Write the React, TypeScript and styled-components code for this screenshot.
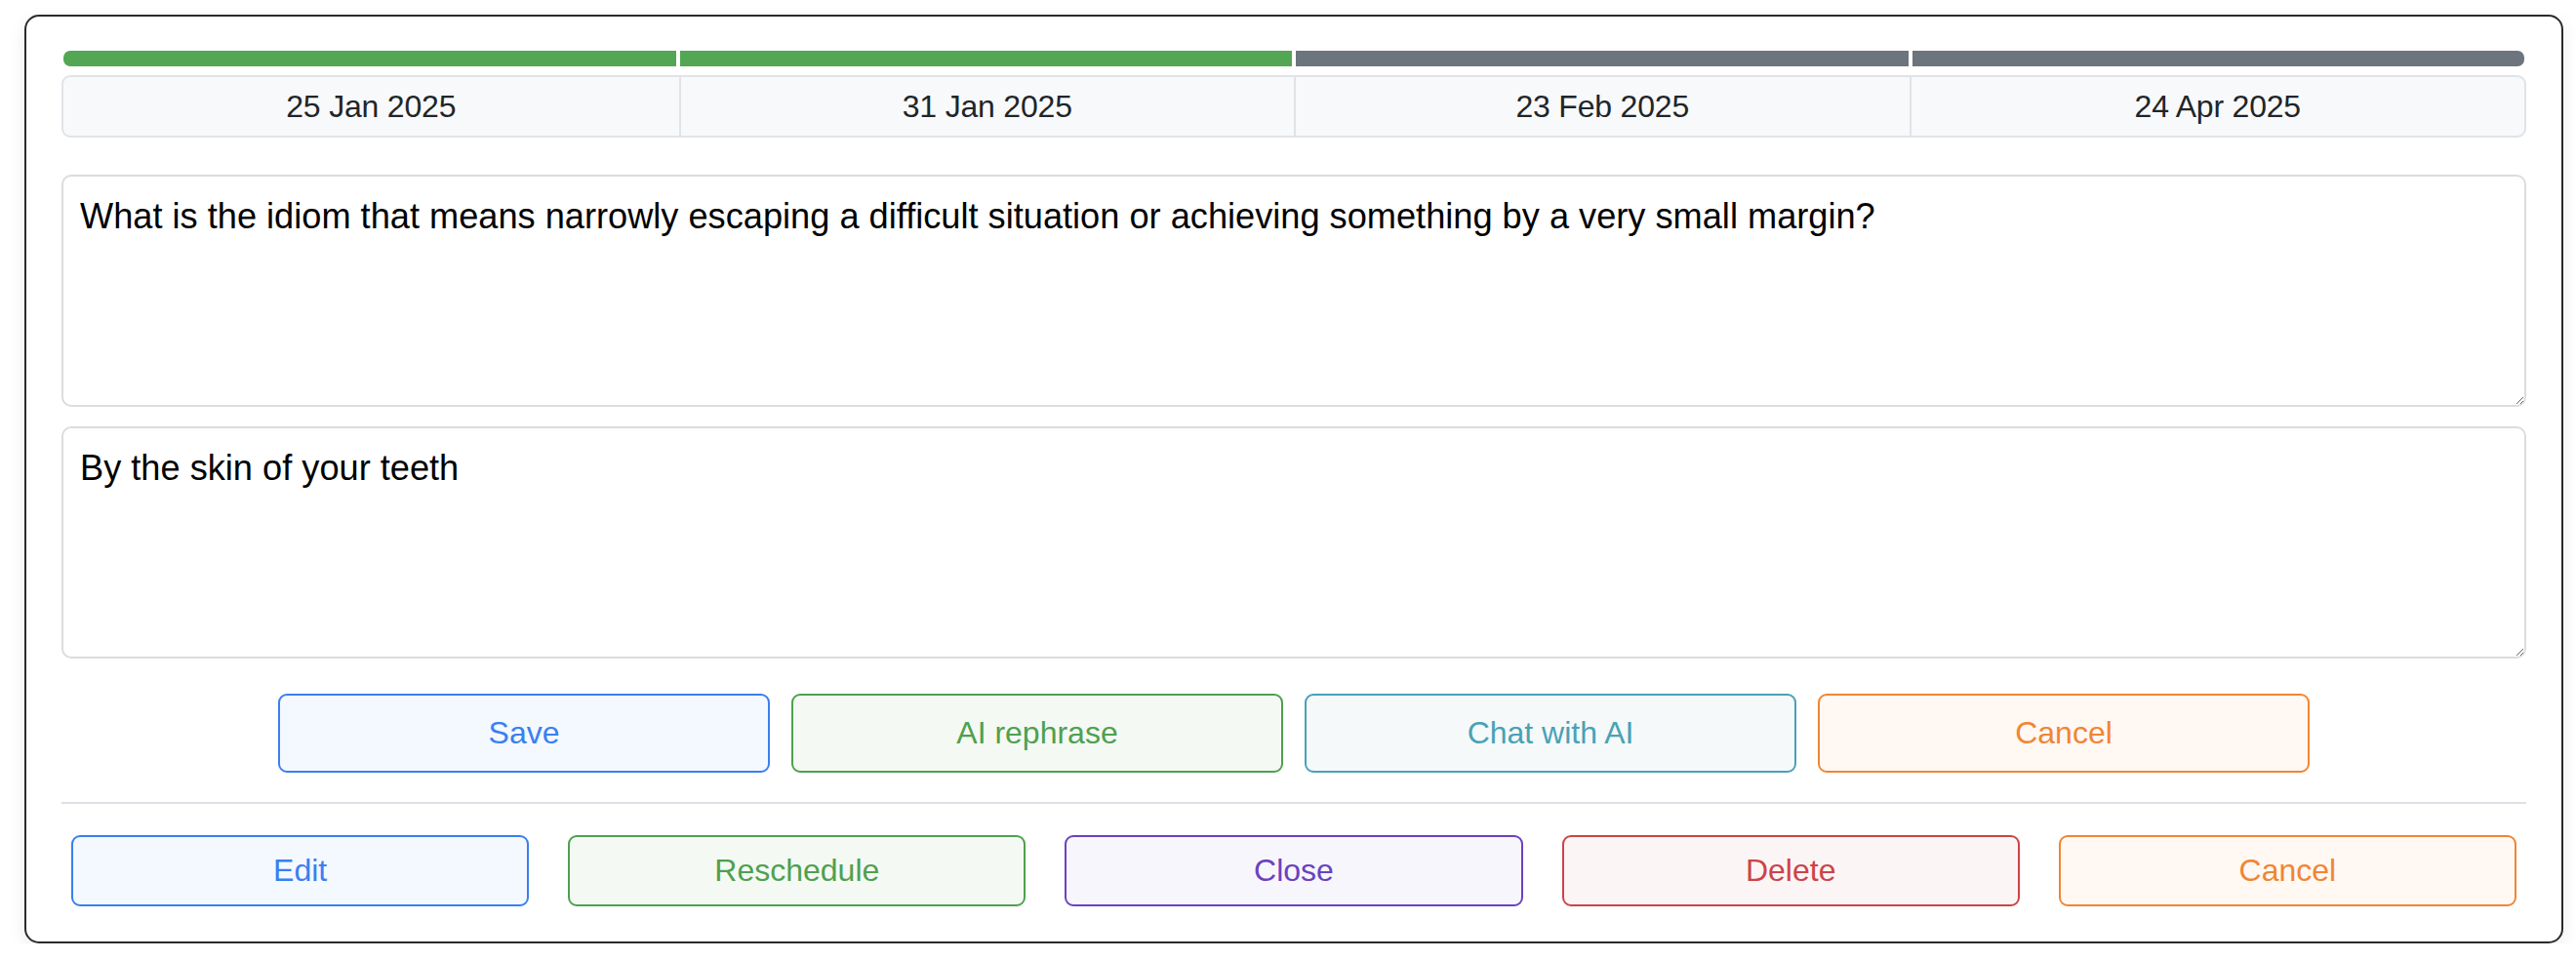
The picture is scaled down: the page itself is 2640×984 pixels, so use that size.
import React from "react";
import styled, { createGlobalStyle } from "styled-components";

const GlobalStyle = createGlobalStyle`
  html, body { margin: 0; padding: 0; background: #ffffff; }
  body { font-family: "Liberation Sans", Arial, Helvetica, sans-serif; }
  * { box-sizing: border-box; }
`;

const Page = styled.div`
  padding: 15px 13px 0 25px;
`;

const Card = styled.div`
  width: 2602px;
  border: 2px solid #2b2b2b;
  border-radius: 15px;
  background: #ffffff;
  box-shadow: 0 6px 18px rgba(0, 0, 0, 0.08);
  padding: 35px 36px 36px 36px;
  display: flex;
  flex-direction: column;
`;

const Progress = styled.div`
  display: grid;
  grid-template-columns: repeat(4, 1fr);
  gap: 4px;
  height: 16px;
  margin: 0 2px;
`;

const Segment = styled.div<{ $done: boolean }>`
  background: ${(p) => (p.$done ? "#53a653" : "#6c757d")};
  &:first-child { border-radius: 7px 0 0 7px; }
  &:last-child { border-radius: 0 7px 7px 0; }
`;

const Dates = styled.div`
  margin-top: 9px;
  display: grid;
  grid-template-columns: repeat(4, 1fr);
  height: 64px;
  border: 2px solid #e0e3e8;
  border-radius: 9px;
  background: #f8f9fa;
  overflow: hidden;
`;

const DateCell = styled.div`
  display: flex;
  align-items: center;
  justify-content: center;
  font-size: 32px;
  letter-spacing: -0.2px;
  color: #212529;
  & + & { border-left: 2px solid #e0e3e8; }
`;

const Field = styled.textarea<{ $first?: boolean }>`
  display: block;
  width: 100%;
  height: 238px;
  margin-top: ${(p) => (p.$first ? "38px" : "20px")};
  padding: 14px 17px;
  border: 2px solid #dcdcdc;
  border-radius: 10px;
  font-family: "Liberation Sans", Arial, Helvetica, sans-serif;
  font-size: 36.2px;
  line-height: 1.5;
  color: #000000;
  background: #ffffff;
  resize: vertical;
  outline: none;
`;

const EditRow = styled.div`
  margin-top: 36px;
  display: flex;
  justify-content: center;
  gap: 22px;
`;

const ActionRow = styled.div`
  display: flex;
  gap: 40px;
  padding: 0 10px;
`;

const Divider = styled.hr`
  margin: 30px 0 32px 0;
  border: 0;
  height: 2px;
  background: #dee2e6;
`;

type Tone = "blue" | "green" | "teal" | "orange" | "purple" | "red";

const tones: Record<Tone, { fg: string; bg: string }> = {
  blue: { fg: "#3a7ff0", bg: "#f4f8ff" },
  green: { fg: "#4fa04f", bg: "#f4f9f4" },
  teal: { fg: "#48a2b6", bg: "#f5f9fa" },
  orange: { fg: "#f08633", bg: "#fff8f3" },
  purple: { fg: "#6a42c0", bg: "#f7f6fc" },
  red: { fg: "#cc4448", bg: "#fcf5f5" },
};

const Button = styled.button<{ $tone: Tone; $wide?: boolean }>`
  display: flex;
  align-items: center;
  justify-content: center;
  height: ${(p) => (p.$wide ? "81px" : "73px")};
  width: ${(p) => (p.$wide ? "504px" : "auto")};
  flex: ${(p) => (p.$wide ? "0 0 504px" : "1 1 0")};
  border: 2px solid ${(p) => tones[p.$tone].fg};
  border-radius: 9px;
  background: ${(p) => tones[p.$tone].bg};
  color: ${(p) => tones[p.$tone].fg};
  font-family: "Liberation Sans", Arial, Helvetica, sans-serif;
  font-size: 32px;
  padding: 0;
  cursor: pointer;
`;

const steps = [
  { date: "25 Jan 2025", done: true },
  { date: "31 Jan 2025", done: true },
  { date: "23 Feb 2025", done: false },
  { date: "24 Apr 2025", done: false },
];

export default function App() {
  return (
    <>
      <GlobalStyle />
      <Page>
        <Card>
          <Progress>
            {steps.map((s) => (
              <Segment key={s.date} $done={s.done} />
            ))}
          </Progress>
          <Dates>
            {steps.map((s) => (
              <DateCell key={s.date}>{s.date}</DateCell>
            ))}
          </Dates>
          <Field
            $first
            defaultValue="What is the idiom that means narrowly escaping a difficult situation or achieving something by a very small margin?"
          />
          <Field defaultValue="By the skin of your teeth" />
          <EditRow>
            <Button $tone="blue" $wide>Save</Button>
            <Button $tone="green" $wide>AI rephrase</Button>
            <Button $tone="teal" $wide>Chat with AI</Button>
            <Button $tone="orange" $wide>Cancel</Button>
          </EditRow>
          <Divider />
          <ActionRow>
            <Button $tone="blue">Edit</Button>
            <Button $tone="green">Reschedule</Button>
            <Button $tone="purple">Close</Button>
            <Button $tone="red">Delete</Button>
            <Button $tone="orange">Cancel</Button>
          </ActionRow>
        </Card>
      </Page>
    </>
  );
}
